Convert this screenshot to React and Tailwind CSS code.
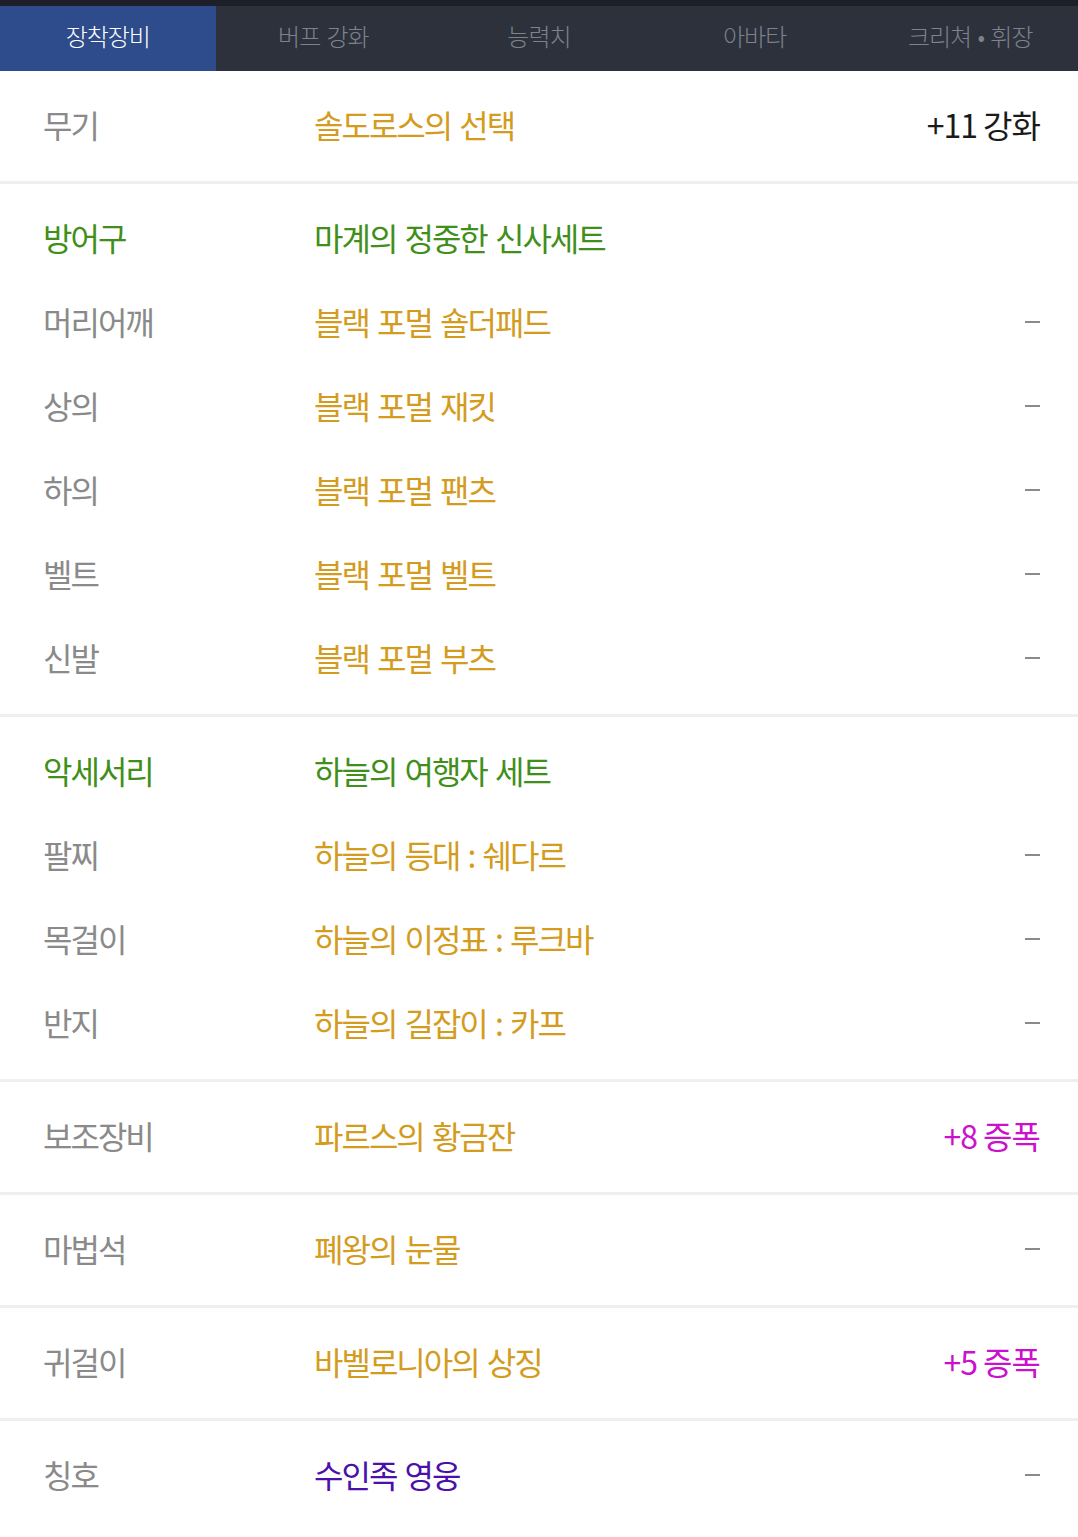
import { useState } from "react";

const tabs = ["장착장비", "버프 강화", "능력치", "아바타", "크리쳐 • 휘장"];

const sections = [
    [{ label: "무기", name: "솔도로스의 선택", value: "+11 강화", valueColor: "text-[#1a1a1a]" }],
    [
        { label: "방어구", name: "마계의 정중한 신사세트", set: true },
        { label: "머리어깨", name: "블랙 포멀 숄더패드", value: "-" },
        { label: "상의", name: "블랙 포멀 재킷", value: "-" },
        { label: "하의", name: "블랙 포멀 팬츠", value: "-" },
        { label: "벨트", name: "블랙 포멀 벨트", value: "-" },
        { label: "신발", name: "블랙 포멀 부츠", value: "-" },
    ],
    [
        { label: "악세서리", name: "하늘의 여행자 세트", set: true },
        { label: "팔찌", name: "하늘의 등대 : 쉐다르", value: "-" },
        { label: "목걸이", name: "하늘의 이정표 : 루크바", value: "-" },
        { label: "반지", name: "하늘의 길잡이 : 카프", value: "-" },
    ],
    [{ label: "보조장비", name: "파르스의 황금잔", value: "+8 증폭", valueColor: "text-[#cc11cc]" }],
    [{ label: "마법석", name: "폐왕의 눈물", value: "-" }],
    [{ label: "귀걸이", name: "바벨로니아의 상징", value: "+5 증폭", valueColor: "text-[#cc11cc]" }],
    [{ label: "칭호", name: "수인족 영웅", value: "-", nameColor: "text-[#4a10a8]" }],
];

function Row({ item }) {
    const labelColor = item.set ? "text-[#3f8f1a]" : "text-[#8a8a8a]";
    const nameColor = item.set ? "text-[#3f8f1a]" : item.nameColor || "text-[#d39c1e]";
    const isDash = item.value === "-";
    return (
        <div className="flex items-center h-[84px] pb-[5px] pl-[43px] pr-[38px]">
            <div className={`w-[271px] shrink-0 text-[32px] tracking-[-2px] ${labelColor}`}>{item.label}</div>
            <div className={`flex-1 text-[32px] tracking-[-2px] [word-spacing:3px] ${nameColor}`}>{item.name}</div>
            {item.value && (
                isDash ? (
                    <div className="w-[15px] h-[2px] mt-[2px] bg-[#8a8a8a]" />
                ) : (
                    <div className={`text-[32px] tracking-[-1px] ${item.valueColor}`}>{item.value}</div>
                )
            )}
        </div>
    );
}

export default function App() {
    const [active, setActive] = useState(0);

    return (
        <div className="min-h-screen bg-white font-['Noto_Sans_CJK_KR',sans-serif] leading-none">
            <div className="h-[6px] bg-[#1d2029]" />
            <nav className="grid grid-cols-5 h-[65px] bg-[#2c313c]">
                {tabs.map((t, i) => (
                    <button
                        key={t}
                        onClick={() => setActive(i)}
                        className={`flex items-center justify-center pb-[5px] text-[24px] tracking-[-1px] [word-spacing:2px] font-light ${
                            active === i ? "bg-[#2e4b8b] text-white" : "text-[#7d828c]"
                        }`}
                    >
                        {t}
                    </button>
                ))}
            </nav>

            {sections.map((rows, i) => (
                <section
                    key={i}
                    className={`py-[13px] ${i < sections.length - 1 ? "border-b-[3px] border-[#efefef]" : ""}`}
                >
                    {rows.map((item) => (
                        <Row key={item.label} item={item} />
                    ))}
                </section>
            ))}
        </div>
    );
}
